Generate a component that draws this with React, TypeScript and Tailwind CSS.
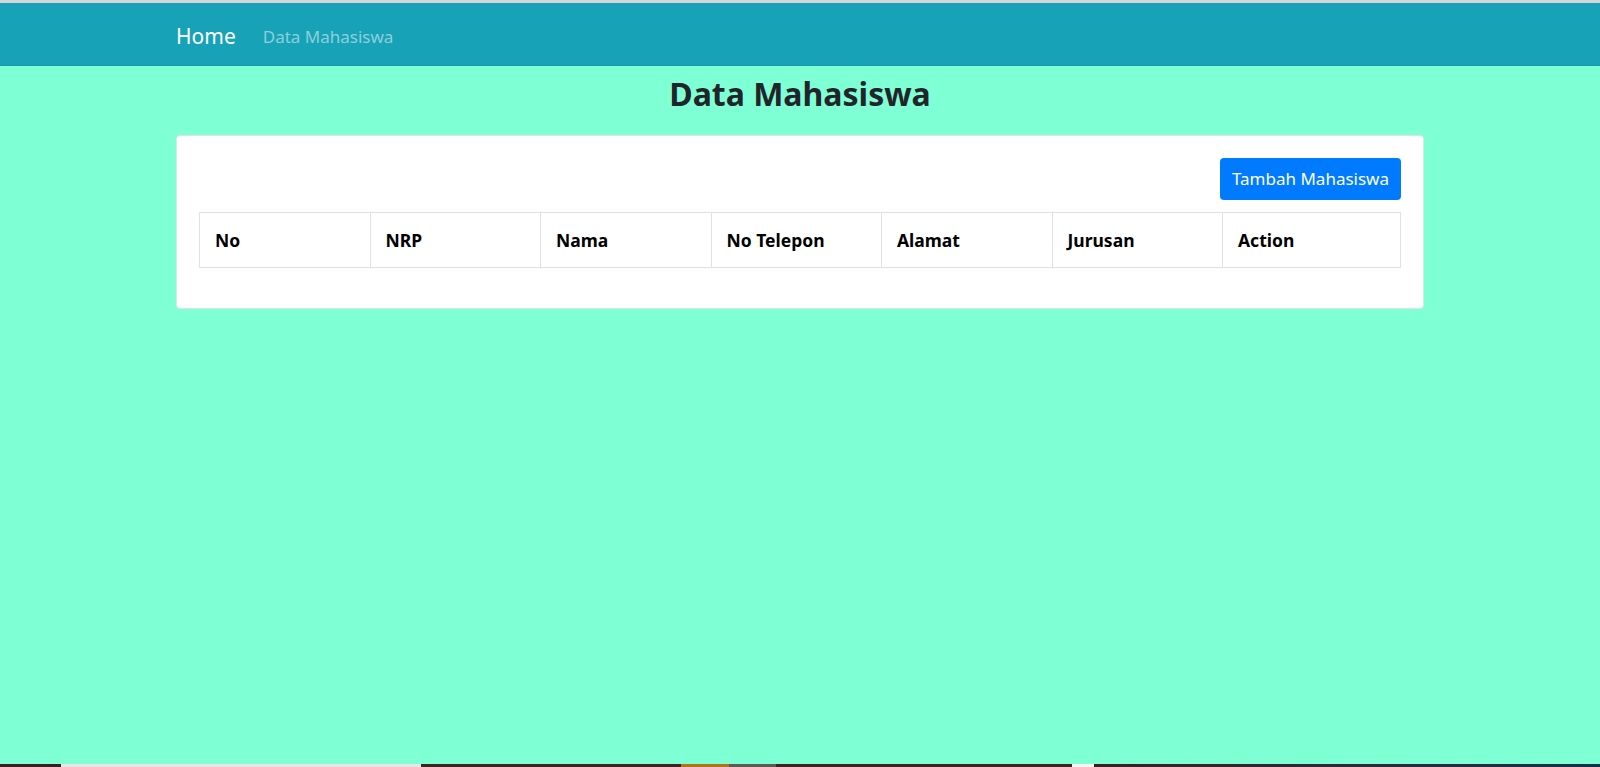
import React from 'react';

const columns = ['No', 'NRP', 'Nama', 'No Telepon', 'Alamat', 'Jurusan', 'Action'];

const App: React.FC = () => {
  return (
    <div
      className="flex h-[767px] flex-col overflow-hidden bg-[#7fffd4]"
      style={{ fontFamily: '"Noto Sans", "Open Sans", sans-serif' }}
    >
      {/* Browser edge */}
      <div className="h-[3px] bg-[#d6d6d6]" />

      {/* Navbar */}
      <nav className="h-[63px] border-b border-[#1597ac] bg-[#17a2b8]">
        <div className="ml-[176px] flex h-full items-center gap-[27px] pt-[5px]">
          <a className="text-[21px] text-white">Home</a>
          <a className="text-[17px] text-white/50">Data Mahasiswa</a>
        </div>
      </nav>

      {/* Main Content */}
      <main className="ml-[176px] w-[1248px] flex-1">
        <h2 className="pt-[6px] pb-[20px] text-center text-[32px] font-bold leading-[43px] text-[#212529]">
          Data Mahasiswa
        </h2>

        <div className="rounded-[4px] border border-[#dfe3e6] bg-white px-[22px] pt-[22px] pb-[40px]">
          <div className="flex justify-end">
            <button className="h-[42px] rounded-[4px] bg-[#007bff] px-[12px] text-[17px] text-white">
              Tambah Mahasiswa
            </button>
          </div>

          <table className="mt-[12px] w-full table-fixed border-collapse">
            <colgroup>
              <col className="w-[170.5px]" />
              <col className="w-[170.5px]" />
              <col className="w-[170.5px]" />
              <col className="w-[170.5px]" />
              <col className="w-[170.5px]" />
              <col className="w-[170.5px]" />
              <col />
            </colgroup>
            <thead>
              <tr>
                {columns.map((col) => (
                  <th
                    key={col}
                    className="h-[55px] border border-[#dee2e6] px-[15px] text-left text-[17.5px] font-bold text-black"
                  >
                    {col}
                  </th>
                ))}
              </tr>
            </thead>
          </table>
        </div>
      </main>

      {/* Taskbar strip */}
      <div className="flex h-[3px]">
        <div className="w-[61px] bg-[#3a1f22]" />
        <div className="w-[360px] bg-[#e6e6e6]" />
        <div className="w-[260px] bg-[#3c2220]" />
        <div className="w-[48px] bg-[#b0741c]" />
        <div className="w-[47px] bg-[#5d5a55]" />
        <div className="w-[296px] bg-[#3d2220]" />
        <div className="w-[22px] bg-[#f4f4f4]" />
        <div className="flex-1 bg-gradient-to-r from-[#3a1f22] to-[#12324a]" />
      </div>
    </div>
  );
};

export default App;
